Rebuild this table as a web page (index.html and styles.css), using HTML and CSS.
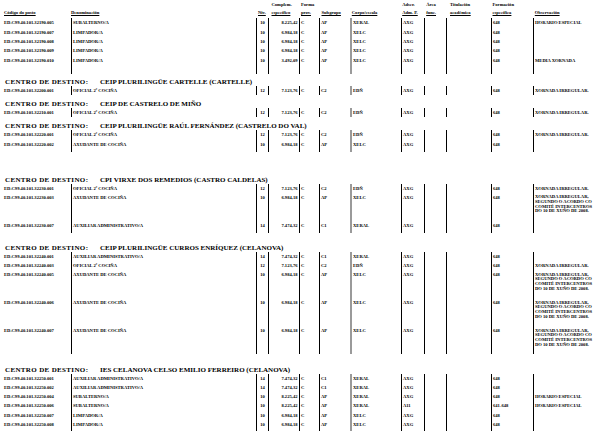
FILE: index.html
```html
<!DOCTYPE html>
<html lang="gl">
<head>
<meta charset="utf-8">
<title>RPT</title>
<link rel="stylesheet" href="styles.css">
</head>
<body>
<div class="page">
  <div class="r colhead">
    <span><i></i><u>Código do posto</u></span>
    <span><i></i><u>Denominación</u></span>
    <span class="h-niv"><i></i><u>Niv.</u></span>
    <span class="h-comp"><i>Complem.</i><u>específico</u></span>
    <span class="h-forma"><i>Forma</i><u>prov.</u></span>
    <span class="h-sub"><i></i><u>Subgrupo</u></span>
    <span class="h-corpo"><i></i><u>Corpo/escala</u></span>
    <span class="h-ads"><i>Adscr.</i><u>Adm. P.</u></span>
    <span class="h-area"><i>Área</i><u>func.</u></span>
    <span class="h-tit"><i>Titulación</i><u>académica</u></span>
    <span class="h-form"><i>Formación</i><u>específica</u></span>
    <span class="h-obs"><i></i><u>Observación</u></span>
  </div>

  <div class="tbl first">
    <div class="r"><span>ED.C99.40.101.32190.005</span><span>SUBALTERNO/A</span><span>10</span><span>8.225,42</span><span>C</span><span>AP</span><span>XERAL</span><span>AXG</span><span></span><span></span><span>648</span><span>HORARIO ESPECIAL</span></div>
    <div class="r"><span>ED.C99.40.101.32190.007</span><span>LIMPADOR/A</span><span>10</span><span>6.984,18</span><span>C</span><span>AP</span><span>XELC</span><span>AXG</span><span></span><span></span><span>648</span><span></span></div>
    <div class="r"><span>ED.C99.40.101.32190.008</span><span>LIMPADOR/A</span><span>10</span><span>6.984,18</span><span>C</span><span>AP</span><span>XELC</span><span>AXG</span><span></span><span></span><span>648</span><span></span></div>
    <div class="r"><span>ED.C99.40.101.32190.009</span><span>LIMPADOR/A</span><span>10</span><span>6.984,18</span><span>C</span><span>AP</span><span>XELC</span><span>AXG</span><span></span><span></span><span>648</span><span></span></div>
    <div class="r"><span>ED.C99.40.101.32190.010</span><span>LIMPADOR/A</span><span>10</span><span>3.492,09</span><span>C</span><span>AP</span><span>XELC</span><span>AXG</span><span></span><span></span><span>648</span><span>MEDIA XORNADA</span></div>
    <div class="r ext ext-l"><span></span><span></span><span></span><span></span><span></span><span></span><span></span><span></span><span></span><span></span><span></span><span></span></div>
  </div>

  <div class="ctr gap-a"><span class="lbl">CENTRO DE DESTINO:</span><span class="nm">CEIP PLURILINGÜE CARTELLE (CARTELLE)</span></div>
  <div class="tbl">
    <div class="r"><span>ED.C99.40.101.32200.001</span><span>OFICIAL 2ª COCIÑA</span><span>12</span><span>7.123,76</span><span>C</span><span>C2</span><span>EDÑ</span><span>AXG</span><span></span><span></span><span>648</span><span>XORNADA IRREGULAR.</span></div>
  </div>

  <div class="ctr gap-b"><span class="lbl">CENTRO DE DESTINO:</span><span class="nm">CEIP DE CASTRELO DE MIÑO</span></div>
  <div class="tbl">
    <div class="r"><span>ED.C99.40.101.32210.001</span><span>OFICIAL 2ª COCIÑA</span><span>12</span><span>7.123,76</span><span>C</span><span>C2</span><span>EDÑ</span><span>AXG</span><span></span><span></span><span>648</span><span>XORNADA IRREGULAR.</span></div>
  </div>

  <div class="ctr gap-b"><span class="lbl">CENTRO DE DESTINO:</span><span class="nm">CEIP PLURILINGÜE RAÚL FERNÁNDEZ (CASTRELO DO VAL)</span></div>
  <div class="tbl">
    <div class="r"><span>ED.C99.40.101.32220.001</span><span>OFICIAL 2ª COCIÑA</span><span>12</span><span>7.123,76</span><span>C</span><span>C2</span><span>EDÑ</span><span>AXG</span><span></span><span></span><span>648</span><span>XORNADA IRREGULAR.</span></div>
    <div class="r"><span>ED.C99.40.101.32220.002</span><span>AXUDANTE DE COCIÑA</span><span>10</span><span>6.984,18</span><span>C</span><span>AP</span><span>XELC</span><span>AXG</span><span></span><span></span><span>648</span><span></span></div>
    <div class="r ext"><span></span><span></span><span></span><span></span><span></span><span></span><span></span><span></span><span></span><span></span><span></span><span></span></div>
  </div>

  <div class="ctr gap-c"><span class="lbl">CENTRO DE DESTINO:</span><span class="nm">CPI VIRXE DOS REMEDIOS (CASTRO CALDELAS)</span></div>
  <div class="tbl">
    <div class="r"><span>ED.C99.40.101.32230.001</span><span>OFICIAL 2ª COCIÑA</span><span>12</span><span>7.123,76</span><span>C</span><span>C2</span><span>EDÑ</span><span>AXG</span><span></span><span></span><span>648</span><span>XORNADA IRREGULAR.</span></div>
    <div class="r tall"><span>ED.C99.40.101.32230.003</span><span>AXUDANTE DE COCIÑA</span><span>10</span><span>6.984,18</span><span>C</span><span>AP</span><span>XELC</span><span>AXG</span><span></span><span></span><span>648</span><span><span class="ml">XORNADA IRREGULAR,<br>SEGUNDO O ACORDO CO<br>COMITÉ INTERCENTROS<br>DO 10 DE XUÑO DE 2008.</span></span></div>
    <div class="r"><span>ED.C99.40.101.32230.007</span><span>AUXILIAR ADMINISTRATIVO/A</span><span>14</span><span>7.474,32</span><span>C</span><span>C1</span><span>XERAL</span><span>AXG</span><span></span><span></span><span>648</span><span></span></div>
    <div class="r ext"><span></span><span></span><span></span><span></span><span></span><span></span><span></span><span></span><span></span><span></span><span></span><span></span></div>
  </div>

  <div class="ctr gap-d"><span class="lbl">CENTRO DE DESTINO:</span><span class="nm">CEIP PLURILINGÜE CURROS ENRÍQUEZ (CELANOVA)</span></div>
  <div class="tbl">
    <div class="r"><span>ED.C99.40.101.32240.001</span><span>AUXILIAR ADMINISTRATIVO/A</span><span>14</span><span>7.474,32</span><span>C</span><span>C1</span><span>XERAL</span><span>AXG</span><span></span><span></span><span>648</span><span></span></div>
    <div class="r"><span>ED.C99.40.101.32240.003</span><span>OFICIAL 2ª COCIÑA</span><span>12</span><span>7.123,76</span><span>C</span><span>C2</span><span>EDÑ</span><span>AXG</span><span></span><span></span><span>648</span><span>XORNADA IRREGULAR.</span></div>
    <div class="r tall"><span>ED.C99.40.101.32240.005</span><span>AXUDANTE DE COCIÑA</span><span>10</span><span>6.984,18</span><span>C</span><span>AP</span><span>XELC</span><span>AXG</span><span></span><span></span><span>648</span><span><span class="ml">XORNADA IRREGULAR,<br>SEGUNDO O ACORDO CO<br>COMITÉ INTERCENTROS<br>DO 10 DE XUÑO DE 2008.</span></span></div>
    <div class="r tall"><span>ED.C99.40.101.32240.006</span><span>AXUDANTE DE COCIÑA</span><span>10</span><span>6.984,18</span><span>C</span><span>AP</span><span>XELC</span><span>AXG</span><span></span><span></span><span>648</span><span><span class="ml">XORNADA IRREGULAR,<br>SEGUNDO O ACORDO CO<br>COMITÉ INTERCENTROS<br>DO 10 DE XUÑO DE 2008.</span></span></div>
    <div class="r tall"><span>ED.C99.40.101.32240.007</span><span>AXUDANTE DE COCIÑA</span><span>10</span><span>6.984,18</span><span>C</span><span>AP</span><span>XELC</span><span>AXG</span><span></span><span></span><span>648</span><span><span class="ml">XORNADA IRREGULAR,<br>SEGUNDO O ACORDO CO<br>COMITÉ INTERCENTROS<br>DO 10 DE XUÑO DE 2008.</span></span></div>
  </div>

  <div class="ctr gap-e"><span class="lbl">CENTRO DE DESTINO:</span><span class="nm">IES CELANOVA CELSO EMILIO FERREIRO (CELANOVA)</span></div>
  <div class="tbl">
    <div class="r"><span>ED.C99.40.101.32250.001</span><span>AUXILIAR ADMINISTRATIVO/A</span><span>14</span><span>7.474,32</span><span>C</span><span>C1</span><span>XERAL</span><span>AXG</span><span></span><span></span><span>648</span><span></span></div>
    <div class="r"><span>ED.C99.40.101.32250.002</span><span>AUXILIAR ADMINISTRATIVO/A</span><span>14</span><span>7.474,32</span><span>C</span><span>C1</span><span>XERAL</span><span>AXG</span><span></span><span></span><span>648</span><span></span></div>
    <div class="r"><span>ED.C99.40.101.32250.004</span><span>SUBALTERNO/A</span><span>10</span><span>8.225,42</span><span>C</span><span>AP</span><span>XERAL</span><span>AXG</span><span></span><span></span><span>648</span><span>HORARIO ESPECIAL</span></div>
    <div class="r"><span>ED.C99.40.101.32250.006</span><span>SUBALTERNO/A</span><span>10</span><span>8.225,42</span><span>C</span><span>AP</span><span>XERAL</span><span>A11</span><span></span><span></span><span>641-648</span><span>HORARIO ESPECIAL</span></div>
    <div class="r"><span>ED.C99.40.101.32250.007</span><span>LIMPADOR/A</span><span>10</span><span>6.984,18</span><span>C</span><span>AP</span><span>XELC</span><span>AXG</span><span></span><span></span><span>648</span><span></span></div>
    <div class="r"><span>ED.C99.40.101.32250.008</span><span>LIMPADOR/A</span><span>10</span><span>6.984,18</span><span>C</span><span>AP</span><span>XELC</span><span>AXG</span><span></span><span></span><span>648</span><span></span></div>
    <div class="r ext ext-s"><span></span><span></span><span></span><span></span><span></span><span></span><span></span><span></span><span></span><span></span><span></span><span></span></div>
  </div>
</div>
</body>
</html>
```

FILE: styles.css
```css
html, body {
  margin: 0;
  padding: 0;
  background: #fff;
}

.page {
  width: 616px;
  height: 439px;
  overflow: hidden;
  box-sizing: border-box;
  padding-left: 4px;
  font-family: "Liberation Serif", "Times New Roman", serif;
  font-weight: bold;
  font-size: 4.6px;
  color: #000;
}

.r {
  display: grid;
  grid-template-columns: 67px 185px 12px 31px 20px 31px 51px 23px 22px 45px 42px 70px;
  height: 9.3px;
  line-height: 9.3px;
  white-space: nowrap;
}

.r > span {
  display: block;
  overflow: visible;
}

.tbl .r > span:nth-child(n+2) {
  border-left: 1px solid #000;
  padding-left: 1px;
}

.tbl .r > span:nth-child(3) {
  text-align: center;
  padding-left: 0;
}

.tbl .r > span:nth-child(4) {
  text-align: right;
  padding-left: 0;
  padding-right: 1.5px;
}

.tbl .r > span:nth-child(7) {
  border-left: 2px solid #9a9a9a;
}

.r.tall {
  height: 28px;
}

.ml {
  display: block;
  line-height: 4.67px;
  padding-top: 2.4px;
}

.r.ext {
  height: 3px;
}

.r.ext-l {
  height: 9px;
}

.r.ext-s {
  height: 2px;
}

/* column header */
.colhead {
  height: 17px;
  line-height: 8px;
  padding-top: 1px;
  box-sizing: border-box;
}

.colhead > span i,
.colhead > span u {
  display: block;
  font-style: normal;
  height: 8px;
}

.colhead > span u {
  text-decoration: underline;
  text-decoration-thickness: 0.8px;
  text-underline-offset: 0.8px;
}

.h-niv { padding-left: 2px; }
.h-comp { padding-left: 3.5px; }
.h-forma { padding-left: 2px; }
.h-sub { padding-left: 2.5px; }
.h-corpo { padding-left: 1.8px; }
.h-ads { padding-left: 1.2px; }
.h-area { padding-left: 2.2px; }
.h-tit { padding-left: 4px; }
.h-form { padding-left: 1.5px; }
.h-obs { padding-left: 1.8px; }

.tbl.first {
  margin-top: 1.4px;
}

/* centre header */
.ctr {
  display: flex;
  height: 8px;
  line-height: 8px;
  font-size: 7px;
  white-space: nowrap;
}

.ctr .lbl {
  width: 95px;
  padding-left: 1px;
  letter-spacing: 0.35px;
}

.gap-a { margin-top: 3.8px; }
.gap-b { margin-top: 5px; }
.gap-c { margin-top: 23.7px; }
.gap-d { margin-top: 10.4px; }
.gap-e { margin-top: 11.4px; }
```
